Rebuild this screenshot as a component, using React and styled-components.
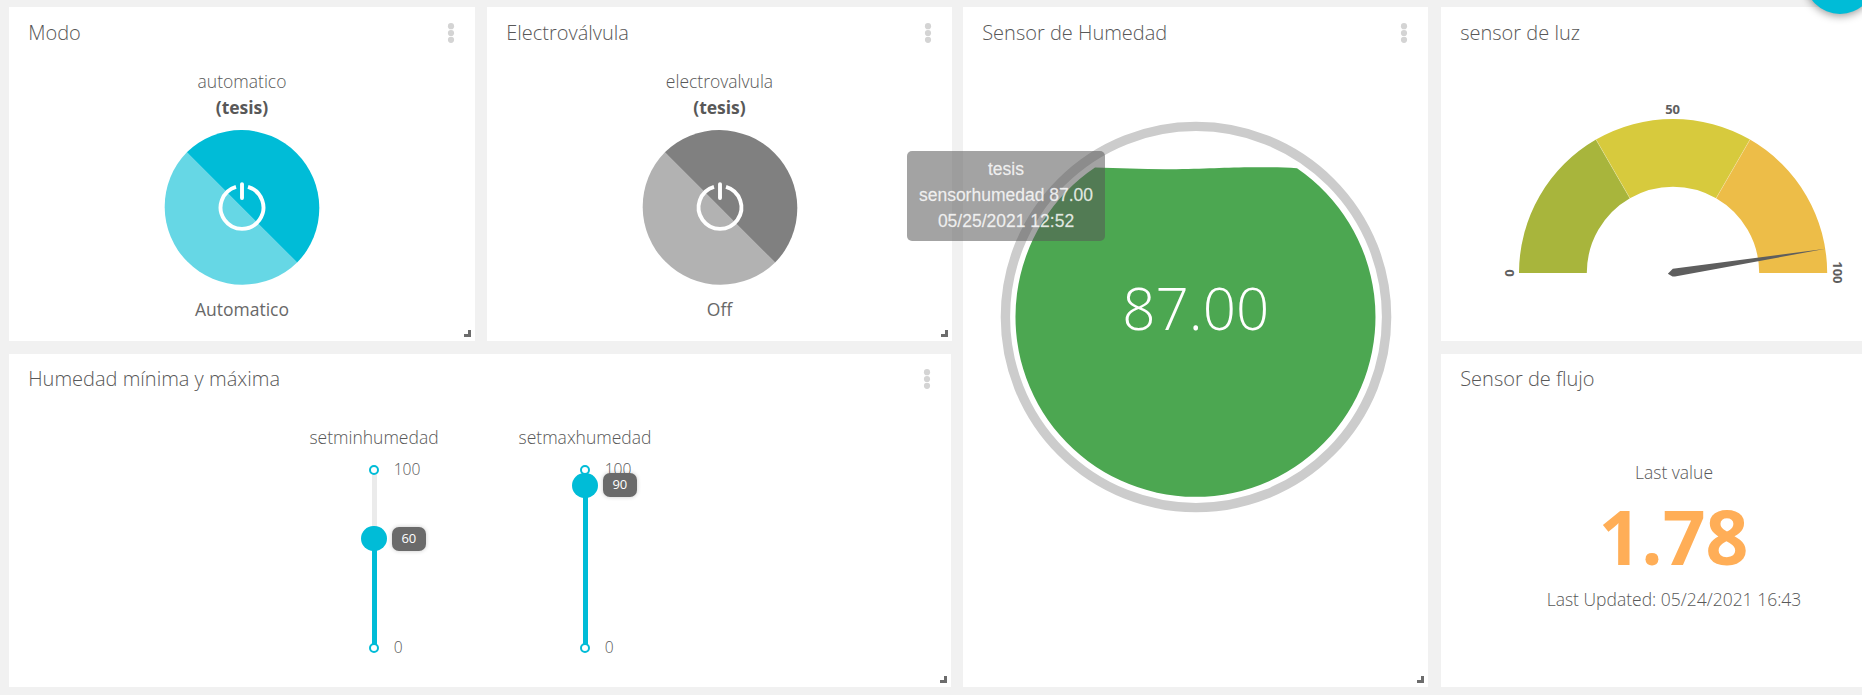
import React from "react";
import styled, { createGlobalStyle } from "styled-components";

const GlobalStyle = createGlobalStyle`
  * { box-sizing: border-box; }
  html, body { margin: 0; background: #f1f1f1; overflow: hidden; }
  body { font-family: "Open Sans", "Noto Sans", sans-serif; color: #585858; }
`;

const Page = styled.main`
  position: relative;
  width: 1862px;
  height: 695px;
  overflow: hidden;
  background: #f1f1f1;
`;

const Board = styled.div`
  display: grid;
  width: 1916px;
  padding: 7.4px 0 0 9px;
  grid-template-columns: 466px 12px 465px 11px 465px 13px 466px;
  grid-template-rows: 333.9px 333.9px;
  row-gap: 12.3px;
`;

const Card = styled.section`
  position: relative;
  display: flex;
  flex-direction: column;
  background: #fff;
  grid-column: ${(p) => p.$col};
  grid-row: ${(p) => p.$row};
  margin-right: ${(p) => p.$inset || 0}px;
`;

const CardHeader = styled.header`
  display: flex;
  justify-content: space-between;
  height: 50px;
  padding: 11.3px 20px 0 19.2px;
`;

const Title = styled.h2`
  margin: 0;
  font-size: 20px;
  line-height: 28px;
  font-weight: 300;
  white-space: nowrap;
`;

const Body = styled.div`
  flex: 1;
  display: flex;
  flex-direction: column;
  align-items: center;
`;

const MenuDots = styled.svg`
  display: block;
  width: 8px;
  height: 22px;
  margin-top: 3.3px;
  fill: #d4d4d4;
`;

const ResizeHandle = styled.span`
  position: absolute;
  right: 4.5px;
  bottom: 4px;
  width: 7px;
  height: 7px;
  border: solid #6c6c6c;
  border-width: 0 3px 3px 0;
`;

const Label = styled.div`
  font-size: 17.5px;
  line-height: 26px;
  font-weight: ${(p) => p.$weight || 300};
  margin-top: ${(p) => p.$top || 0}px;
  white-space: nowrap;
`;

const StateLabel = styled(Label)`
  font-weight: 400;
  color: #686868;
`;

const SwitchIcon = styled.svg`
  display: block;
  width: 156px;
  height: 156px;
  margin-top: 9.3px;
  overflow: visible;
`;

const SliderRow = styled.div`
  display: flex;
  padding: 20.2px 1px 0 0;
`;

const SliderColumn = styled.div`
  display: flex;
  flex-direction: column;
  align-items: center;
  width: 211px;
`;

const Track = styled.div`
  position: relative;
  width: 5px;
  height: 178px;
  margin-top: 19.9px;
  background: #ebebeb;
`;

const Fill = styled.div`
  position: absolute;
  left: 0;
  right: 0;
  bottom: 0;
  background: #00bcd7;
`;

const Stop = styled.span`
  position: absolute;
  left: -2.9px;
  ${(p) => p.$edge}: -5px;
  width: 10px;
  height: 10px;
  border: 2px solid #00bcd7;
  border-radius: 50%;
  background: #fff;
`;

const StopLabel = styled.span`
  position: absolute;
  left: 22.2px;
  ${(p) => p.$edge}: ${(p) => (p.$edge === "top" ? "-12px" : "-10.4px")};
  font-size: 15.6px;
  line-height: 22px;
  font-weight: 300;
`;

const Thumb = styled.span`
  position: absolute;
  left: -10.2px;
  width: 25.4px;
  height: 25.4px;
  margin-top: -12.7px;
  border-radius: 50%;
  background: #00bcd7;
`;

const ValueTag = styled.span`
  position: absolute;
  left: 20.2px;
  width: 34.4px;
  height: 24px;
  margin-top: -11.8px;
  border-radius: 7px;
  background: #6a6a6a;
  box-shadow: 0 0 4px rgba(0, 0, 0, 0.22);
  color: #fff;
  font-size: 13px;
  line-height: 23px;
  text-align: center;
`;

const LevelChart = styled.svg`
  display: block;
  width: 392px;
  height: 392px;
  margin-top: 63.4px;
`;

const LevelText = styled.text`
  font-size: 58.3px;
  font-weight: 300;
  fill: #fff;
  text-anchor: middle;
`;

const DialChart = styled.svg`
  display: block;
  width: 466px;
  height: 250px;
`;

const DialText = styled.text`
  font-size: 13px;
  font-weight: 700;
  fill: #5e5e5e;
  text-anchor: middle;
`;

const BigValue = styled.div`
  margin-top: 0.9px;
  padding-right: 1px;
  font-size: 75px;
  line-height: 100px;
  font-weight: 700;
  color: #ffae57;
`;

const Tooltip = styled.div`
  position: absolute;
  left: 907px;
  top: 150.6px;
  width: 198px;
  height: 90px;
  padding-top: 5.6px;
  border-radius: 5px;
  background: rgba(88, 88, 88, 0.55);
  color: rgba(255, 255, 255, 0.82);
  -webkit-text-stroke: 0.3px rgba(255, 255, 255, 0.5);
  font: 17.5px/26px "Liberation Sans", Arial, sans-serif;
  text-align: center;
  white-space: nowrap;
`;

const AddButton = styled.button`
  position: absolute;
  left: 1805px;
  top: -56px;
  width: 70px;
  height: 70px;
  padding: 0;
  border: 0;
  border-radius: 50%;
  background: #00bcd7;
  box-shadow: 0 2px 8px rgba(0, 0, 0, 0.4);
`;

function Widget({ title, col, row, inset, children }) {
  return (
    <Card $col={col} $row={row} $inset={inset}>
      <CardHeader>
        <Title>{title}</Title>
        <MenuDots viewBox="0 0 8 22">
          <circle cx="4" cy="4.2" r="3.1" />
          <circle cx="4" cy="11" r="3.1" />
          <circle cx="4" cy="17.8" r="3.1" />
        </MenuDots>
      </CardHeader>
      <Body>{children}</Body>
      <ResizeHandle />
    </Card>
  );
}

function PowerSwitch({ name, device, state, dark, light }) {
  return (
    <>
      <Label $top={10.6}>{name}</Label>
      <Label $weight={700}>{device}</Label>
      <SwitchIcon viewBox="0 0 156 156">
        <g transform="translate(0 0.4)">
          <path d="M22.85 22.85A78 78 0 0 0 133.15 133.15Z" fill={light} />
          <path d="M22.85 22.85A78 78 0 0 1 133.15 133.15Z" fill={dark} />
          <path
            d="M72 57.5A21.4 21.4 0 1 0 84 57.5"
            fill="none"
            stroke="#fff"
            strokeWidth="3.9"
          />
          <path d="M78 54.7V68.6" stroke="#fff" strokeWidth="3.9" strokeLinecap="round" />
        </g>
      </SwitchIcon>
      <StateLabel $top={10.7}>{state}</StateLabel>
    </>
  );
}

function Slider({ name, value, offset }) {
  return (
    <SliderColumn>
      <Label>{name}</Label>
      <Track>
        <Fill style={{ top: offset }} />
        <Stop $edge="top" />
        <Stop $edge="bottom" />
        <StopLabel $edge="top">100</StopLabel>
        <StopLabel $edge="bottom">0</StopLabel>
        <Thumb style={{ top: offset }} />
        <ValueTag style={{ top: offset }}>{value}</ValueTag>
      </Track>
    </SliderColumn>
  );
}

function LevelGauge() {
  return (
    <LevelChart viewBox="0 0 392 392">
      <circle cx="196" cy="196" r="190.6" fill="none" stroke="#ccc" strokeWidth="9.4" />
      <path
        d="M95 46.5C120 47 145 48.4 170 48.2C205 48 225 46.2 255 46.2C272 46.2 285 46.4 297 47.2A180 180 0 1 1 95 46.5Z"
        fill="#4ca751"
      />
      <LevelText x="195.7" y="209.2">87.00</LevelText>
    </LevelChart>
  );
}

function Dial() {
  return (
    <DialChart viewBox="0 0 466 250">
      <path d="M78 216A154 154 0 0 1 155 82.6L188.9 141.3A86.2 86.2 0 0 0 145.8 216Z" fill="#a8b53c" />
      <path d="M155 82.6A154 154 0 0 1 309 82.6L275.1 141.3A86.2 86.2 0 0 0 188.9 141.3Z" fill="#d7ca3d" />
      <path d="M309 82.6A154 154 0 0 1 386.2 216H318.2A86.2 86.2 0 0 0 275.1 141.3Z" fill="#edbd48" />
      <path d="M155 82.6L188.9 141.3M309 82.6L275.1 141.3" stroke="#fff" strokeWidth="0.4" opacity="0.6" />
      <path d="M384.7 191.7L234 219.6L231.5 219.5L226.8 216.7L231.8 211.8Z" fill="#5e5e5e" />
      <DialText x="231.6" y="57">50</DialText>
      <DialText transform="translate(73 216) rotate(-90)">0</DialText>
      <DialText transform="translate(391.8 215.4) rotate(90)">100</DialText>
    </DialChart>
  );
}

export default function App() {
  return (
    <>
      <GlobalStyle />
      <Page>
        <Board>
          <Widget title="Modo" col="1" row="1">
            <PowerSwitch
              name="automatico"
              device="(tesis)"
              state="Automatico"
              dark="#00bcd7"
              light="#66d7e5"
            />
          </Widget>
          <Widget title="Electroválvula" col="3" row="1">
            <PowerSwitch
              name="electrovalvula"
              device="(tesis)"
              state="Off"
              dark="#808080"
              light="#b2b2b2"
            />
          </Widget>
          <Widget title="Humedad mínima y máxima" col="1 / 4" row="2" inset={1}>
            <SliderRow>
              <Slider name="setminhumedad" value={60} offset={68.7} />
              <Slider name="setmaxhumedad" value={90} offset={15.6} />
            </SliderRow>
          </Widget>
          <Widget title="Sensor de Humedad" col="5" row="1 / 3">
            <LevelGauge />
          </Widget>
          <Widget title="sensor de luz" col="7" row="1">
            <Dial />
          </Widget>
          <Widget title="Sensor de flujo" col="7" row="2">
            <Label $top={55.2}>Last value</Label>
            <BigValue>1.78</BigValue>
            <Label $top={0.6}>Last Updated: 05/24/2021 16:43</Label>
          </Widget>
        </Board>
        <Tooltip>
          <div>tesis</div>
          <div>sensorhumedad 87.00</div>
          <div>05/25/2021 12:52</div>
        </Tooltip>
        <AddButton aria-label="Add" />
      </Page>
    </>
  );
}
